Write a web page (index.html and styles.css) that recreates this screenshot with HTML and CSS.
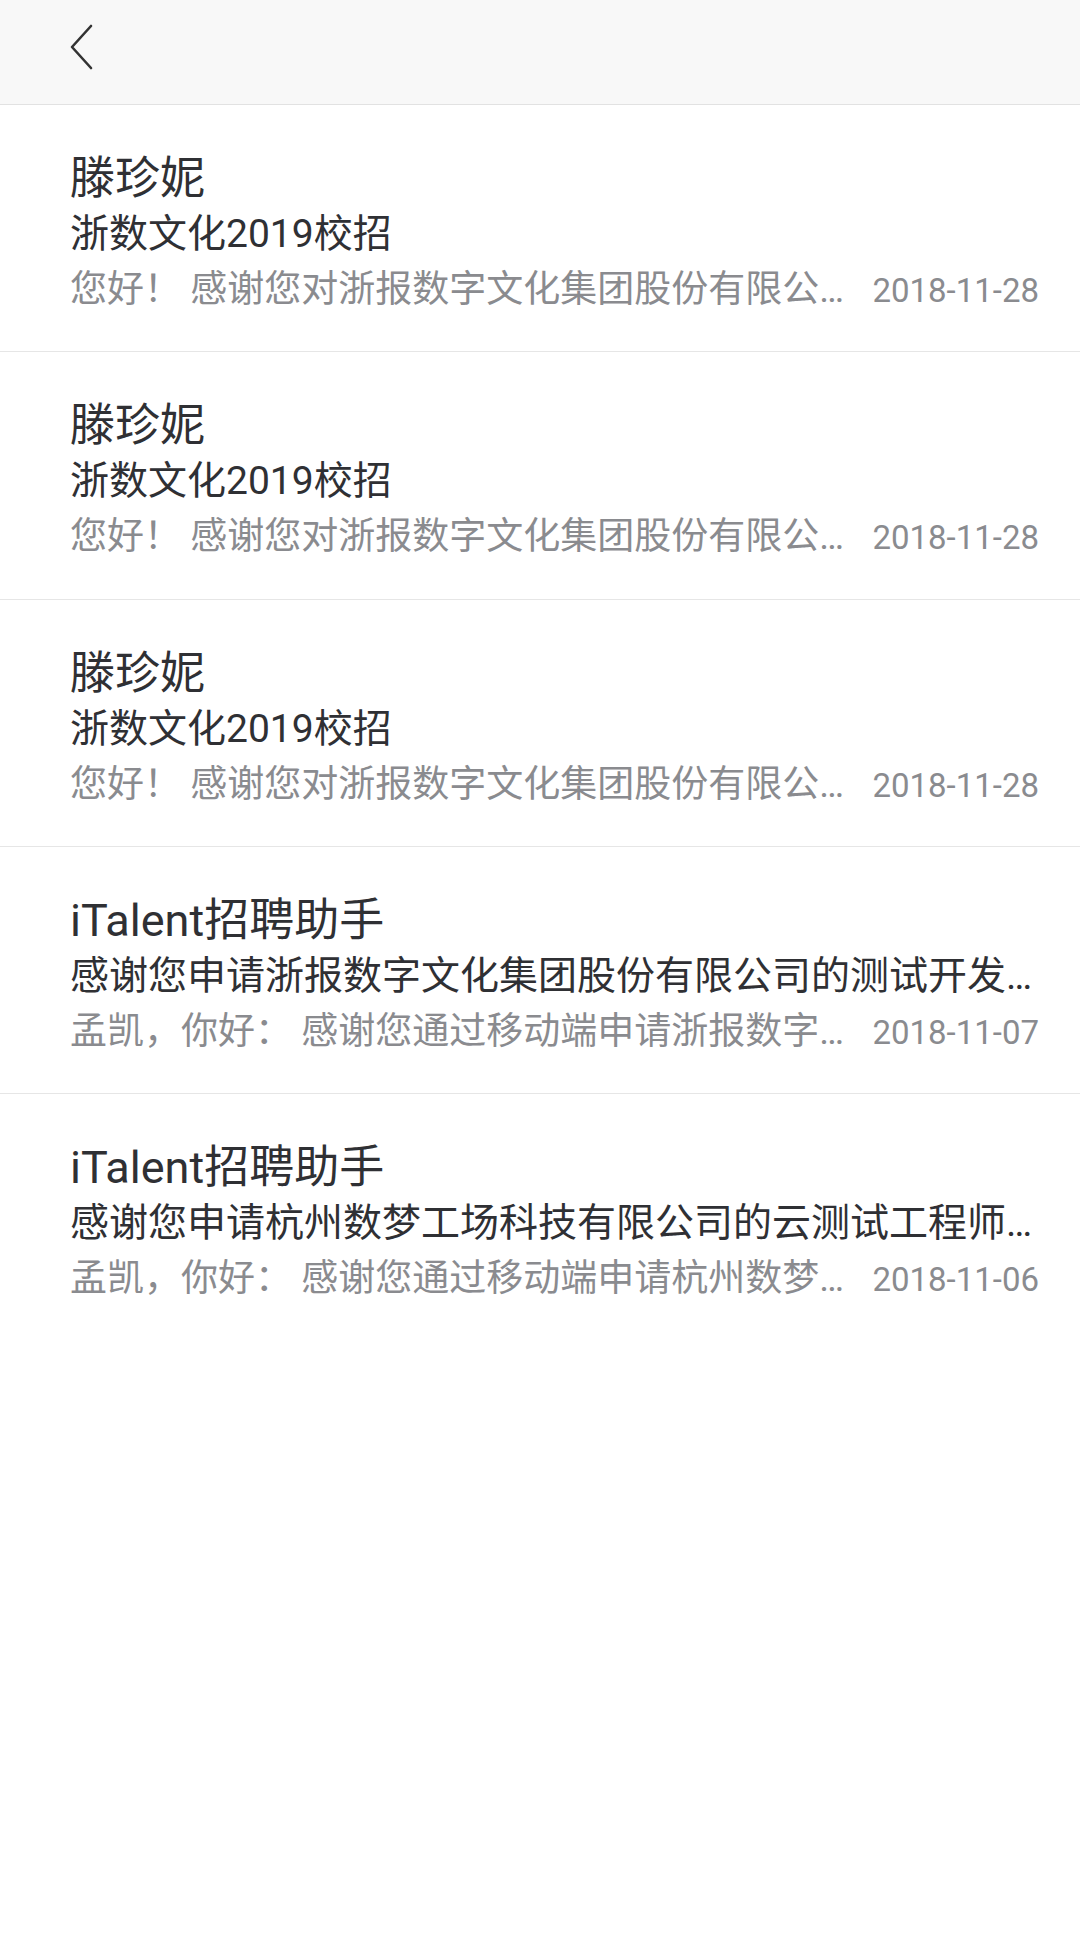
FILE: index.html
```html
<!DOCTYPE html>
<html lang="zh-CN">
<head>
<meta charset="utf-8">
<title>消息</title>
<link rel="stylesheet" href="styles.css">
</head>
<body>
<div class="header">
  <svg class="back" width="24" height="48" viewBox="0 0 24 48"><path d="M21 2 L2 23 L21 44" fill="none" stroke="#333" stroke-width="2.6" stroke-linecap="round" stroke-linejoin="round"/></svg>
</div>
<div class="list">
  <div class="row">
    <div class="name">滕珍妮</div>
    <div class="subject">浙数文化2019校招</div>
    <div class="meta"><span class="preview">您好！ 感谢您对浙报数字文化集团股份有限公司的关注</span><span class="date">2018-11-28</span></div>
  </div>
  <div class="row">
    <div class="name">滕珍妮</div>
    <div class="subject">浙数文化2019校招</div>
    <div class="meta"><span class="preview">您好！ 感谢您对浙报数字文化集团股份有限公司的关注</span><span class="date">2018-11-28</span></div>
  </div>
  <div class="row">
    <div class="name">滕珍妮</div>
    <div class="subject">浙数文化2019校招</div>
    <div class="meta"><span class="preview">您好！ 感谢您对浙报数字文化集团股份有限公司的关注</span><span class="date">2018-11-28</span></div>
  </div>
  <div class="row">
    <div class="name">iTalent招聘助手</div>
    <div class="subject">感谢您申请浙报数字文化集团股份有限公司的测试开发工程师职位</div>
    <div class="meta"><span class="preview">孟凯，你好： 感谢您通过移动端申请浙报数字文化集团股份有限公司</span><span class="date">2018-11-07</span></div>
  </div>
  <div class="row">
    <div class="name">iTalent招聘助手</div>
    <div class="subject">感谢您申请杭州数梦工场科技有限公司的云测试工程师职位</div>
    <div class="meta"><span class="preview">孟凯，你好： 感谢您通过移动端申请杭州数梦工场科技有限公司</span><span class="date">2018-11-06</span></div>
  </div>
</div>
</body>
</html>
```
FILE: styles.css
```css
* { box-sizing: border-box; }
html, body { margin: 0; padding: 0; background: #ffffff; }
body {
  width: 1080px;
  min-height: 1948px;
  font-family: Roboto, "Noto Sans CJK SC", sans-serif;
  color: #2f3034;
}
.header {
  height: 105px;
  background: #f8f8f8;
  border-bottom: 1px solid #e2e2e2;
  display: flex;
  align-items: flex-start;
  padding-left: 70px;
  padding-top: 24px;
}
.back { display: block; }
.row {
  padding: 45px 41px 33.3px 70px;
  border-bottom: 1px solid #e6e6e6;
}
.row:last-child { border-bottom: none; }
.name {
  font-size: 45px;
  line-height: 57px;
  white-space: nowrap;
}
.subject {
  font-size: 39px;
  line-height: 55px;
  white-space: nowrap;
  overflow: hidden;
  text-overflow: ellipsis;
}
.meta {
  display: flex;
  align-items: baseline;
  height: 56px;
  line-height: 56px;
  color: #8a8b8f;
}
.preview {
  flex: 1;
  min-width: 0;
  font-size: 37px;
  white-space: nowrap;
  overflow: hidden;
  text-overflow: ellipsis;
}
.date {
  flex: none;
  margin-left: 20px;
  font-size: 33px;
}
```
